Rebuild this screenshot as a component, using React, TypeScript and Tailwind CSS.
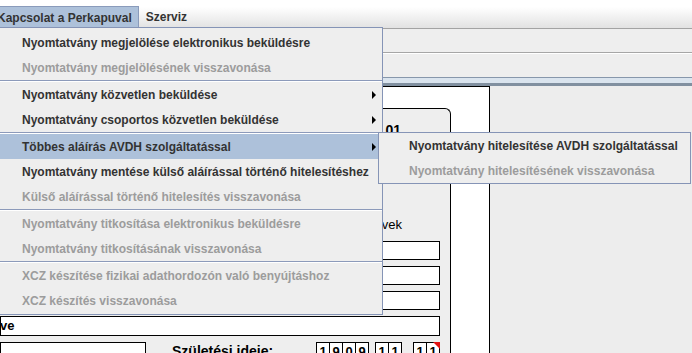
import React from "react"

type Entry = { label: string; disabled?: boolean; sub?: boolean; active?: boolean } | "sep"

const menu: Entry[] = [
  { label: "Nyomtatvány megjelölése elektronikus beküldésre" },
  { label: "Nyomtatvány megjelölésének visszavonása", disabled: true },
  "sep",
  { label: "Nyomtatvány közvetlen beküldése", sub: true },
  { label: "Nyomtatvány csoportos közvetlen beküldése", sub: true },
  "sep",
  { label: "Többes aláírás AVDH szolgáltatással", sub: true, active: true },
  { label: "Nyomtatvány mentése külső aláírással történő hitelesítéshez" },
  { label: "Külső aláírással történő hitelesítés visszavonása", disabled: true },
  "sep",
  { label: "Nyomtatvány titkosítása elektronikus beküldésre", disabled: true },
  { label: "Nyomtatvány titkosításának visszavonása", disabled: true },
  "sep",
  { label: "XCZ készítése fizikai adathordozón való benyújtáshoz", disabled: true },
  { label: "XCZ készítés visszavonása", disabled: true },
]

const submenu: Entry[] = [
  { label: "Nyomtatvány hitelesítése AVDH szolgáltatással" },
  { label: "Nyomtatvány hitelesítésének visszavonása", disabled: true },
]

function Separator() {
  return (
    <div className="h-[2px]">
      <div className="h-px bg-[#8c9aba]" />
      <div className="h-px bg-white" />
    </div>
  )
}

function MenuRow({ item, pad }: { item: Exclude<Entry, "sep">; pad: string }) {
  return (
    <div
      className={`flex h-[25px] items-center ${pad} ${item.active ? "bg-[#adc1da]" : ""} ${
        item.disabled ? "text-[#9c9c9c]" : "text-[#333333]"
      }`}
    >
      <span className="whitespace-nowrap pt-px text-[12px] leading-[24px] font-bold">{item.label}</span>
      {item.sub && (
        <span className="ml-auto mr-[6px] h-0 w-0 border-y-[4px] border-l-[4px] border-y-transparent border-l-black" />
      )}
    </div>
  )
}

function Digits({ values }: { values: string }) {
  return (
    <div className="flex h-[20px] border-l border-t border-black bg-white">
      {values.split("").map((d, i) => (
        <div
          key={i}
          className="flex w-[13px] justify-center border-r border-black text-[13px] leading-[18px] font-bold"
        >
          {d}
        </div>
      ))}
    </div>
  )
}

export default function App() {
  return (
    <div className="relative h-[353px] w-[692px] overflow-hidden bg-[#ededed] font-['Liberation_Sans',Arial,sans-serif] text-black">
      {/* menu bar */}
      <div className="flex h-[29px] items-end border-b border-[#a3a3a3] bg-gradient-to-b from-white from-25% to-[#e2e2e2]">
        <div className="-ml-[3px] flex h-[22px] items-center border-r border-t border-[#8a9bbb] bg-[#adc1da] pr-[6px] text-[12px] font-bold text-[#333333]">
          Kapcsolat a Perkapuval
        </div>
        <div className="flex h-[22px] items-center px-[7px] text-[12px] font-bold text-[#333333]">Szerviz</div>
      </div>

      {/* toolbars */}
      <div className="h-[24px] border-b border-[#a6a6a6] bg-[#eeeeee]" />
      <div className="h-[24px] border-t border-white bg-[#eeeeee]" />
      <div className="h-[9px] border-t border-b-[3px] border-t-[#8797ab] border-b-[#8190a0] bg-[#dae4ee]" />

      {/* form page */}
      <div className="flex">
        <div className="h-[267px] w-[490px] border-r border-t border-black bg-white">
          <div className="mt-[21px] h-[245px] w-[451px] rounded-tr-[6px] border-r border-t border-black bg-[#eeeeee]">
            <div className="mt-[13px] w-[401px] text-right text-[14px] leading-[16px] font-bold">01</div>
            <div className="mt-[79px] w-[402px] text-right text-[13px] leading-[16px]">Nevek</div>
            <div className="ml-[240px] mt-[8px] h-[19px] w-[200px] border border-black bg-white" />
            <div className="ml-[240px] mt-[6px] h-[19px] w-[200px] border border-black bg-white" />
            <div className="ml-[240px] mt-[6px] h-[19px] w-[200px] border border-black bg-white" />
            <div className="mt-[6px] flex h-[20px] w-[440px] items-center border border-black bg-white pl-0 text-[13px] font-bold">
              <span className="-ml-px">ve</span>
            </div>
            <div className="mt-[6px] flex h-[20px] items-start">
              <div className="h-[20px] w-[146px] border border-black bg-white" />
              <div className="w-[170px] pl-[26px] pt-px text-[14px] leading-[16px] font-bold">Születési ideje:</div>
              <Digits values="1909" />
              <div className="ml-[6px]">
                <Digits values="11" />
              </div>
              <div className="relative ml-[11px]">
                <Digits values="11" />
                <span className="absolute right-0 top-0 h-0 w-0 border-l-[7px] border-t-[7px] border-l-transparent border-t-[#e01010]" />
              </div>
            </div>
          </div>
        </div>
        <div className="flex-1" />
      </div>

      {/* dropdown menu */}
      <div className="absolute left-0 top-[27px] w-[383px] border-b border-r border-t border-[#8594b6] bg-[#eeeeee] pb-px pt-[2px]">
        {menu.map((item, i) =>
          item === "sep" ? <Separator key={i} /> : <MenuRow key={i} item={item} pad="pl-[22px]" />
        )}
      </div>

      {/* submenu */}
      <div className="absolute left-[378px] top-[132px] w-[313px] border border-[#8594b6] bg-[#eeeeee]">
        {submenu.map((item, i) =>
          item === "sep" ? <Separator key={i} /> : <MenuRow key={i} item={item} pad="pl-[30px]" />
        )}
      </div>
    </div>
  )
}
